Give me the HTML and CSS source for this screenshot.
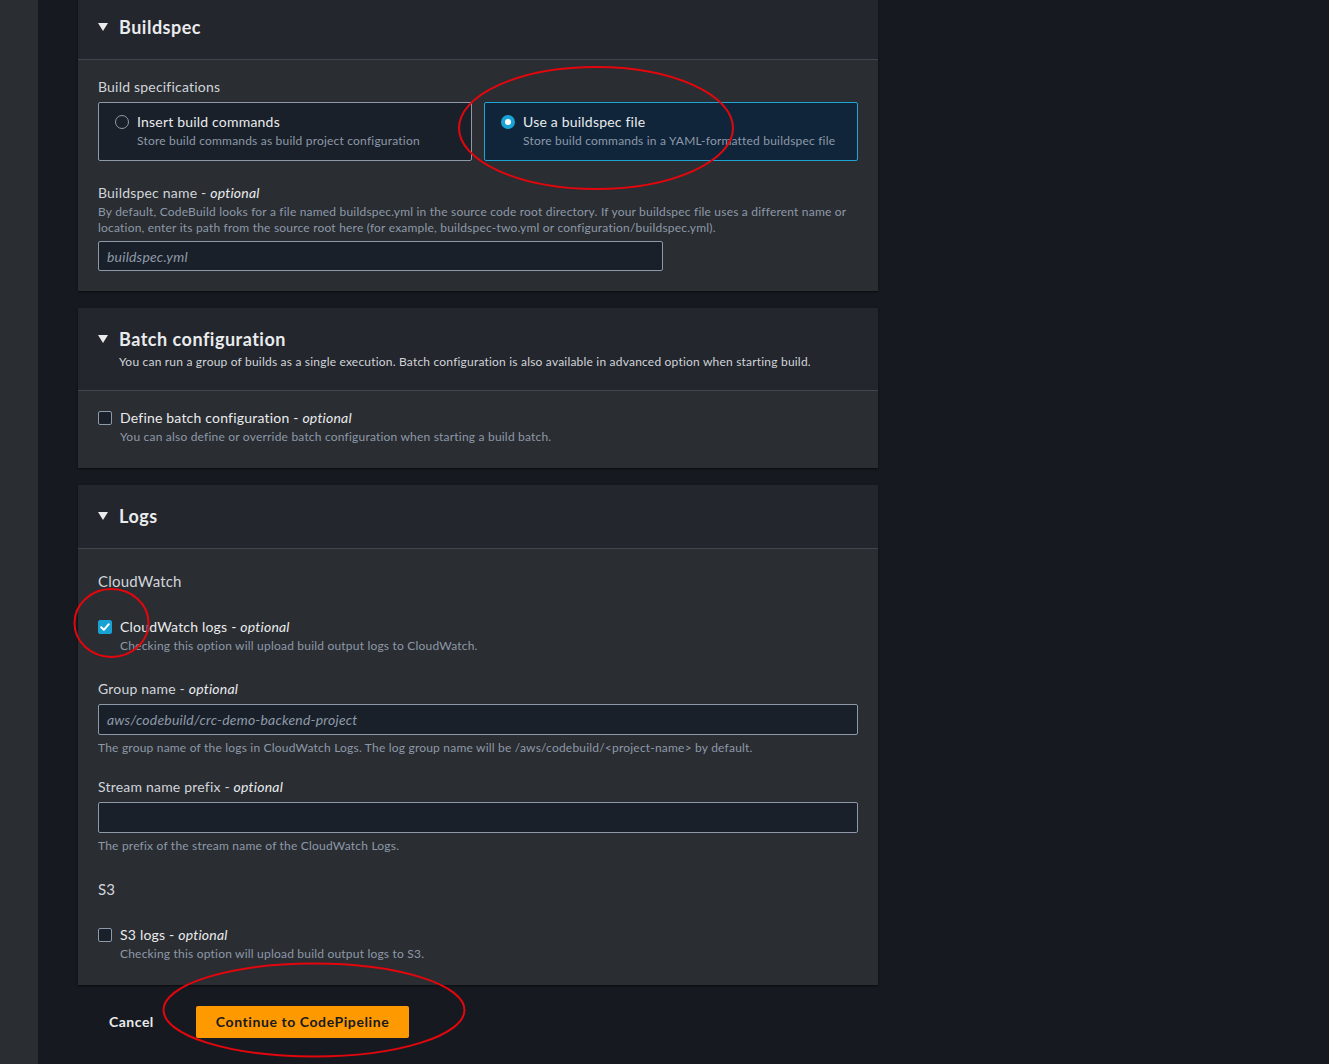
FILE: index.html
```html
<!doctype html>
<html lang="en">
<head>
	<meta http-equiv="Content-Type" content="text/html; charset=utf-8">
	<title>Create build project</title>
	<link rel="stylesheet" href="styles.css">
</head>
<body>
<div class="layout">
	<div class="sidebar"></div>

	<main class="content">

		<!-- Buildspec -->
		<section class="card card-first">
			<div class="card-header">
				<h2 class="card-title"><span class="caret"></span>Buildspec</h2>
			</div>
			<div class="card-body">
				<div class="field-label">Build specifications</div>
				<div class="tiles">
					<label class="tile">
						<span class="radio"></span>
						<span class="tile-text">
							<span class="tile-title">Insert build commands</span>
							<span class="tile-desc">Store build commands as build project configuration</span>
						</span>
					</label>
					<label class="tile selected">
						<span class="radio checked"></span>
						<span class="tile-text">
							<span class="tile-title">Use a buildspec file</span>
							<span class="tile-desc">Store build commands in a YAML-formatted buildspec file</span>
						</span>
					</label>
				</div>

				<div class="field field-spaced">
					<div class="field-label">Buildspec name - <i>optional</i></div>
					<div class="field-desc">By default, CodeBuild looks for a file named buildspec.yml in the source code root directory. If your buildspec file uses a different name or location, enter its path from the source root here (for example, buildspec-two.yml or configuration/buildspec.yml).</div>
					<input class="text-input short" type="text" placeholder="buildspec.yml">
				</div>
			</div>
		</section>

		<!-- Batch configuration -->
		<section class="card">
			<div class="card-header">
				<h2 class="card-title"><span class="caret"></span>Batch configuration</h2>
				<div class="card-desc">You can run a group of builds as a single execution. Batch configuration is also available in advanced option when starting build.</div>
			</div>
			<div class="card-body card-body-check">
				<label class="check-row">
					<span class="checkbox"></span>
					<span class="check-text">
						<span class="check-title">Define batch configuration - <i>optional</i></span>
						<span class="check-desc">You can also define or override batch configuration when starting a build batch.</span>
					</span>
				</label>
			</div>
		</section>

		<!-- Logs -->
		<section class="card">
			<div class="card-header">
				<h2 class="card-title"><span class="caret"></span>Logs</h2>
			</div>
			<div class="card-body card-body-logs">
				<h3 class="group-title">CloudWatch</h3>
				<label class="check-row">
					<span class="checkbox checked">
						<svg width="14" height="14" viewBox="0 0 14 14"><path d="M3.2 7.2 L5.9 9.9 L10.8 4.2" fill="none" stroke="#fff" stroke-width="2" stroke-linecap="round" stroke-linejoin="round"/></svg>
					</span>
					<span class="check-text">
						<span class="check-title">CloudWatch logs - <i>optional</i></span>
						<span class="check-desc">Checking this option will upload build output logs to CloudWatch.</span>
					</span>
				</label>

				<div class="field">
					<div class="field-label">Group name - <i>optional</i></div>
					<input class="text-input" type="text" placeholder="aws/codebuild/crc-demo-backend-project">
					<div class="field-hint">The group name of the logs in CloudWatch Logs. The log group name will be /aws/codebuild/&lt;project-name&gt; by default.</div>
				</div>

				<div class="field field-tight">
					<div class="field-label">Stream name prefix - <i>optional</i></div>
					<input class="text-input" type="text">
					<div class="field-hint">The prefix of the stream name of the CloudWatch Logs.</div>
				</div>

				<h3 class="group-title group-spaced">S3</h3>
				<label class="check-row">
					<span class="checkbox"></span>
					<span class="check-text">
						<span class="check-title">S3 logs - <i>optional</i></span>
						<span class="check-desc">Checking this option will upload build output logs to S3.</span>
					</span>
				</label>
			</div>
		</section>

		<div class="actions">
			<button class="btn-link" type="button">Cancel</button>
			<button class="btn-primary" type="button">Continue to CodePipeline</button>
		</div>
	</main>
</div>

<!-- red hand-drawn annotations -->
<svg class="annotations" width="1329" height="1064" viewBox="0 0 1329 1064">
	<ellipse cx="596" cy="128" rx="137" ry="61" fill="none" stroke="#e3070d" stroke-width="2"/>
	<ellipse cx="111.5" cy="623" rx="37" ry="34" fill="none" stroke="#e3070d" stroke-width="2"/>
	<ellipse cx="314" cy="1010" rx="150.5" ry="46.5" fill="none" stroke="#e3070d" stroke-width="2"/>
</svg>
</body>
</html>
```

FILE: styles.css
```css
body {
  margin: 0;
  background: #161a20;
  color: #d1d5db;
  font-family: Lato, "Open Sans", sans-serif;
  font-size: 14px;
  line-height: 22px;
  letter-spacing: 0.2px;
  overflow: hidden;
}

.layout {
  display: flex;
  min-height: 100vh;
}

.sidebar {
  width: 38px;
  flex: none;
  background: #2a2d32;
}

.content {
  width: 800px;
  padding-left: 40px;
}

/* Cards */
.card {
  background: #2a2d32;
  margin-bottom: 17px;
  box-shadow: 0 1px 2px rgba(0, 0, 0, 0.6);
}

.card-first {
  margin-top: -4px;
}

.card-header {
  background: #23262c;
  padding: 18px 20px 19px;
  border-bottom: 1px solid #41454c;
}

.card-title {
  margin: 0;
  font-size: 18px;
  line-height: 26px;
  font-weight: 700;
  letter-spacing: 0.5px;
  color: #e9ebed;
  display: flex;
  align-items: center;
}

.caret {
  width: 0;
  height: 0;
  border-left: 5px solid transparent;
  border-right: 5px solid transparent;
  border-top: 8px solid #e9ebed;
  margin-right: 11px;
}

.card-desc {
  margin: 2px 0 1px 21px;
  font-size: 12px;
  line-height: 16px;
  color: #d1d5db;
}

.card-body {
  padding: 16px 20px 20px;
}

.card-body-check {
  padding-bottom: 23px;
}

.card-body-logs {
  padding-top: 21px;
  padding-bottom: 23px;
}

/* Fields */
.field-label {
  color: #d1d5db;
}

.field-label i,
.check-title i {
  color: #e9ebed;
}

.field-desc,
.field-hint {
  font-size: 12px;
  line-height: 16px;
  color: #8d99a8;
}

.field {
  margin-top: 24px;
}

.field-spaced {
  margin-top: 21px;
}

.field-tight {
  margin-top: 20px;
}

.field-hint {
  margin-top: 5px;
}

.text-input {
  display: block;
  box-sizing: border-box;
  width: 100%;
  height: 31px;
  margin-top: 4px;
  padding: 0 8px;
  background: #1a2029;
  border: 1px solid #8d99a8;
  border-radius: 2px;
  color: #d1d5db;
  font-family: inherit;
  font-size: 14px;
  letter-spacing: 0.2px;
}

.field .field-desc + .text-input {
  margin-top: 5px;
}

.text-input::placeholder {
  color: #8d99a8;
  font-style: italic;
}

.text-input.short {
  width: 565px;
  height: 30px;
}

/* Radio tiles */
.tiles {
  display: grid;
  grid-template-columns: 1fr 1fr;
  gap: 12px;
  margin-top: 4px;
}

.tile {
  display: flex;
  gap: 8px;
  padding: 8px 16px 11px;
  background: #1a2029;
  border: 1px solid #8d99a8;
  border-radius: 2px;
}

.tile.selected {
  background: #10253a;
  border-color: #1ea5d6;
}

.radio {
  flex: none;
  box-sizing: border-box;
  width: 14px;
  height: 14px;
  margin-top: 4px;
  border: 1.5px solid #8d99a8;
  border-radius: 50%;
}

.radio.checked {
  border: 4.5px solid #1aa3d6;
  background: #fff;
}

.tile-text,
.check-text {
  display: flex;
  flex-direction: column;
}

.tile-title,
.check-title {
  color: #e9ebed;
}

.tile-desc,
.check-desc {
  font-size: 12px;
  line-height: 16px;
  color: #8d99a8;
}

/* Checkboxes */
.check-row {
  display: flex;
  gap: 8px;
}

.checkbox {
  flex: none;
  box-sizing: border-box;
  width: 14px;
  height: 14px;
  margin-top: 4px;
  border: 1px solid #8d99a8;
  border-radius: 2px;
  background: #1a2029;
}

.checkbox.checked {
  border-color: #17a2d4;
  background: #17a2d4;
  position: relative;
}

.checkbox.checked svg {
  position: absolute;
  left: -1px;
  top: -1px;
}

/* Group headings */
.group-title {
  margin: 0 0 24px;
  font-size: 15px;
  font-weight: 400;
  line-height: 22px;
  color: #d1d5db;
}

.group-spaced {
  margin-top: 24px;
}

/* Actions */
.actions {
  display: flex;
  align-items: center;
  gap: 22px;
  margin-top: 21px;
  padding-left: 11px;
}

.btn-link {
  background: none;
  border: none;
  padding: 4px 20px;
  color: #e9ebed;
  font-family: inherit;
  font-size: 14px;
  font-weight: 700;
  line-height: 22px;
  letter-spacing: 0.5px;
}

.btn-primary {
  height: 32px;
  padding: 4px 20px;
  background: #ff9900;
  border: none;
  border-radius: 2px;
  color: #16191f;
  font-family: inherit;
  font-size: 14px;
  font-weight: 700;
  line-height: 22px;
  letter-spacing: 0.58px;
}

.annotations {
  position: absolute;
  top: 0;
  left: 0;
  pointer-events: none;
}
```
